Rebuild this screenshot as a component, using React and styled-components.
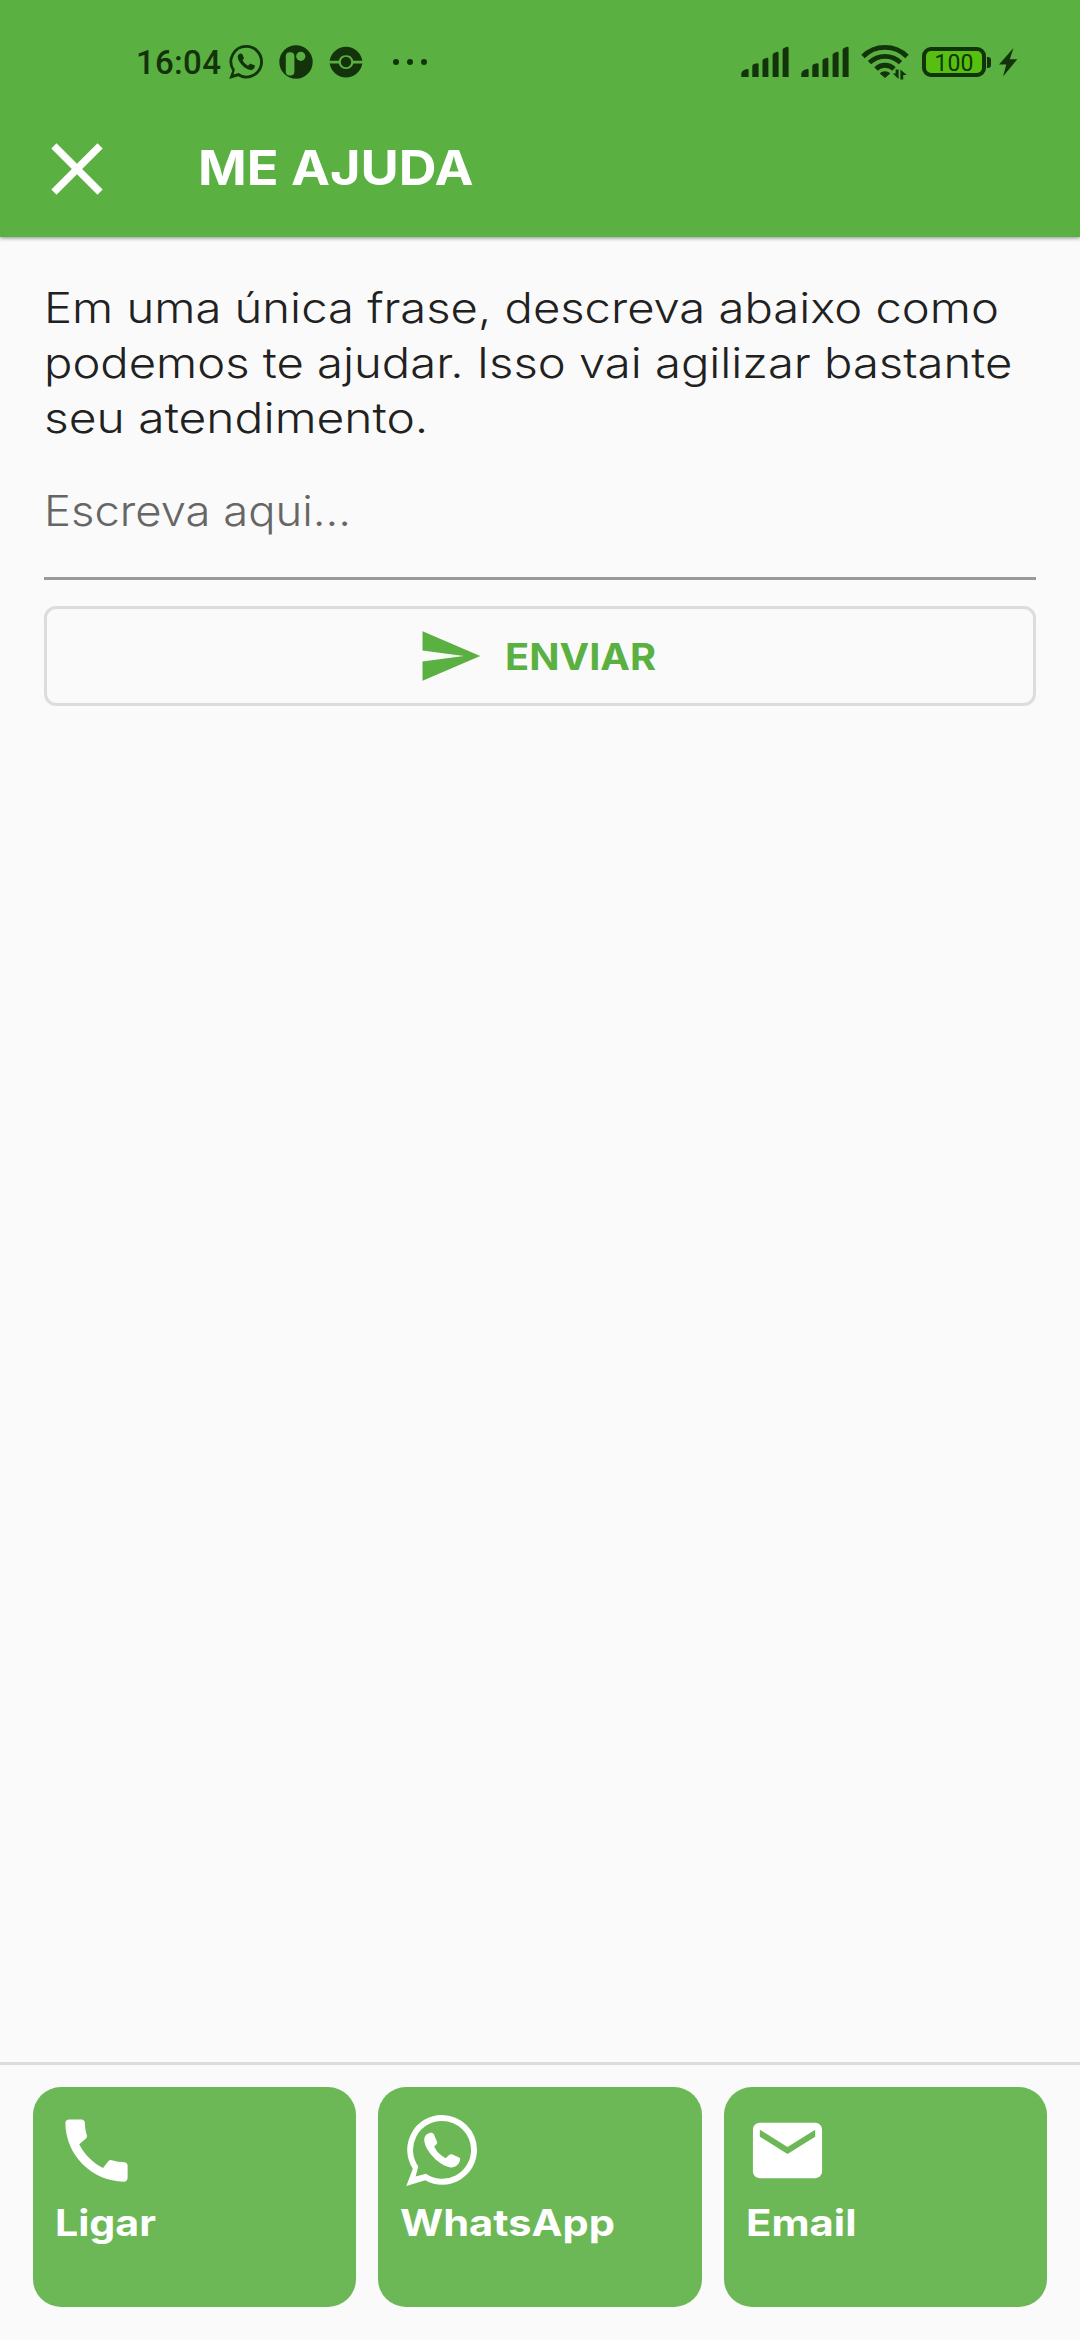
import React, { useState } from "react";
import styled, { createGlobalStyle, ThemeProvider } from "styled-components";
import { MdCall, MdClose, MdEmail, MdSend } from "react-icons/md";

const theme = {
    colors: {
        primary: "#5bb042",
        card: "#6cb856",
        background: "#fafafa",
        border: "#dcdcdc",
        text: "#212121",
        hint: "#666666",
        underline: "#999999",
        status: "#13340a",
        white: "#ffffff",
    },
};

const GlobalStyle = createGlobalStyle`
    * {
        box-sizing: border-box;
    }

    body {
        margin: 0;
        background-color: #fafafa;
        font-family: "Inter", "Liberation Sans", sans-serif;
    }

    svg {
        display: block;
        flex-shrink: 0;
    }
`;

const Screen = styled.div`
    display: flex;
    flex-direction: column;
    width: 1080px;
    height: 2340px;
    background-color: ${({ theme }) => theme.colors.background};
`;

const Header = styled.header`
    height: 237px;
    background-color: ${({ theme }) => theme.colors.primary};
    box-shadow: 0 1px 4px rgba(0, 0, 0, 0.45);
`;

const StatusBar = styled.div`
    display: flex;
    justify-content: space-between;
    height: 94px;
    padding: 30px 62px 0 136px;
    color: ${({ theme }) => theme.colors.status};
`;

const StatusGroup = styled.div`
    display: flex;
    align-items: center;
    height: 64px;
    gap: ${({ $gap }) => $gap}px;
`;

const Clock = styled.span`
    width: 77px;
    padding-top: 2px;
    font-family: "Roboto", sans-serif;
    font-size: 33px;
    font-weight: 500;
    letter-spacing: 0.3px;
    line-height: 64px;
    white-space: nowrap;
`;

const More = styled.span`
    margin-left: 13px;
`;

const Battery = styled.div`
    display: flex;
    align-items: center;
    gap: 1px;
    margin: 0 -5px 0 1px;
`;

const BatteryBody = styled.div`
    display: flex;
    align-items: center;
    justify-content: center;
    width: 64px;
    height: 30px;
    padding-top: 3px;
    border: 4px solid ${({ theme }) => theme.colors.status};
    border-radius: 9px;
    background-color: #55c00f;
    font-family: "Roboto", sans-serif;
    font-size: 23px;
    line-height: 22px;
`;

const BatteryTip = styled.div`
    width: 4px;
    height: 11px;
    border-radius: 0 3px 3px 0;
    background-color: ${({ theme }) => theme.colors.status};
`;

const AppBar = styled.div`
    display: flex;
    align-items: center;
    height: 143px;
    padding: 7px 33px 0;
    color: ${({ theme }) => theme.colors.white};
`;

const IconButton = styled.button`
    padding: 0;
    border: none;
    background: none;
    color: inherit;
`;

const Stretched = styled.span`
    display: block;
    width: fit-content;
    white-space: nowrap;
    transform: scaleX(${({ $stretch }) => $stretch});
    transform-origin: left;
`;

const Title = styled.h1`
    margin: 0 0 3px 77px;
    font-size: 48px;
    font-weight: 700;
    line-height: 60px;
`;

const Content = styled.main`
    display: flex;
    flex: 1;
    flex-direction: column;
    padding: 43px 44px 0;
`;

const Message = styled.p`
    margin: 0;
    color: ${({ theme }) => theme.colors.text};
    font-size: 42px;
    font-weight: 300;
    line-height: 55px;
`;

const Field = styled.div`
    height: 135px;
    border-bottom: 3px solid ${({ theme }) => theme.colors.underline};
`;

const Input = styled.input`
    display: block;
    width: 90%;
    height: 132px;
    margin: 0;
    padding: 0 0 2px;
    border: none;
    outline: none;
    background: none;
    color: ${({ theme }) => theme.colors.text};
    font-family: inherit;
    font-size: 42px;
    font-weight: 300;
    transform: scaleX(1.08);
    transform-origin: left;

    &::placeholder {
        color: ${({ theme }) => theme.colors.hint};
        opacity: 1;
    }
`;

const SendButton = styled.button`
    display: flex;
    align-items: center;
    justify-content: center;
    gap: 22px;
    height: 100px;
    margin-top: 26px;
    padding: 0 17px 0 0;
    border: 3px solid ${({ theme }) => theme.colors.border};
    border-radius: 12px;
    background: none;
    color: ${({ theme }) => theme.colors.primary};
    font-family: inherit;
    font-size: 37px;
    font-weight: 700;
`;

const Footer = styled.footer`
    display: grid;
    grid-template-columns: repeat(3, 1fr);
    gap: 22px;
    padding: 22px 33px 33px;
    border-top: 3px solid ${({ theme }) => theme.colors.border};
`;

const ContactCard = styled.button`
    display: flex;
    flex-direction: column;
    align-items: flex-start;
    height: 220px;
    padding: 22px;
    border: none;
    border-radius: 28px;
    background-color: ${({ theme }) => theme.colors.card};
    color: ${({ theme }) => theme.colors.white};
    font-family: inherit;
`;

const CardIcon = styled.span`
    display: flex;
    align-items: center;
    justify-content: center;
    width: 83px;
    height: 83px;
`;

const CardLabel = styled(Stretched)`
    margin-top: 8px;
    font-size: 37px;
    font-weight: 700;
    line-height: 46px;
`;

const WhatsAppIcon = ({ size }) => (
    <svg width={size} height={size} viewBox="137 228 214 214" fill="currentColor">
        <path
            fillRule="evenodd"
            d="M157.5 390A105 105 0 0 1 246 228A105 105 0 0 1 351 333A105 105 0 0 1 195 425L138 442ZM174 383L166 413L197 405A87 87 0 0 0 333 333A87 87 0 0 0 246 246A87 87 0 0 0 174 383Z"
        />
        <path d="M206 283C212 280 219 282 221 286L231 310C232 313 230 315 228 317L222 323C228 338 242 350 256 358L268 348C271 345 274 346 277 347L297 356C300 358 301 360 300 364C297 378 286 387 272 386C240 382 196 340 192 305C191 295 197 286 206 283Z" />
    </svg>
);

const ParkingIcon = () => (
    <svg width="34" height="34" viewBox="0 0 34 34">
        <circle cx="17" cy="17" r="16.7" fill="currentColor" />
        <rect x="6.8" y="7.3" width="8.6" height="23.2" rx="4" fill="#5bb042" />
        <circle cx="21.8" cy="11.3" r="4.6" fill="#5bb042" />
    </svg>
);

const BallIcon = () => (
    <svg width="34" height="34" viewBox="0 0 34 34" fill="currentColor">
        <path d="M0.7 15.7A16.5 16.5 0 0 1 33.3 15.7H24.3A7.6 7.6 0 0 0 9.7 15.7Z" />
        <path d="M0.7 18.5A16.5 16.5 0 0 0 33.3 18.5H24.3A7.6 7.6 0 0 1 9.7 18.5Z" />
        <circle cx="17" cy="17" r="5.2" />
    </svg>
);

const DotsIcon = () => (
    <svg width="36" height="8" viewBox="0 0 36 8" fill="currentColor">
        <circle cx="4" cy="4" r="3" />
        <circle cx="18" cy="4" r="3" />
        <circle cx="32" cy="4" r="3" />
    </svg>
);

const SignalIcon = () => (
    <svg width="48" height="34" viewBox="0 0 48 34" fill="currentColor">
        <path d="M0.3 32V28.5Q0.6 26 3 25L6 24Q7.6 23.7 7.6 25V32Z" />
        <path d="M11.3 32V21Q11.5 19.5 13 19L16 18.2Q17.6 18 17.6 19.5V32Z" />
        <path d="M21.5 32V15.5Q21.7 14.3 23 13.8L26 12.8Q27.4 12.7 27.4 14V32Z" />
        <path d="M31.6 32V9.7Q31.8 8.4 33 7.9L36 6.8Q37.6 6.6 37.6 8V32Z" />
        <path d="M41.6 32V4.7Q41.8 3.4 43 2.9L46 1.8Q47.6 1.6 47.6 3V32Z" />
    </svg>
);

const WifiIcon = () => (
    <svg width="48" height="36" viewBox="0 0 48 36" fill="none">
        <g stroke="currentColor" strokeWidth="4.8">
            <path d="M2 12.5C14 0.4 34 0.4 46 12.5" />
            <path d="M8.5 18.6C17 10.2 31 10.2 39.5 18.6" />
            <path d="M15 25C20 20 28 20 33 25" />
        </g>
        <path
            d="M24 34L18.8 29.4C21.5 26.6 26.5 26.6 29.2 29.4ZM37.6 25.5V35L31.8 29.5H34.6V25.5ZM39.4 35.5V25.5L45.8 31H42.2V35.5Z"
            fill="currentColor"
        />
    </svg>
);

const BoltIcon = () => (
    <svg width="20" height="30" viewBox="0 0 20 30" fill="currentColor">
        <path d="M15.5 1L1 17.5H8.3L5 29.5L19.3 12.3H11.8Z" />
    </svg>
);

const contacts = [
    { label: "Ligar", icon: <MdCall size={83} />, stretch: 1.11 },
    { label: "WhatsApp", icon: <WhatsAppIcon size={71} />, stretch: 1.125 },
    { label: "Email", icon: <MdEmail size={83} />, stretch: 1.13 },
];

const HelpPage = () => {
    const [message, setMessage] = useState("");

    return (
        <Screen>
            <Header>
                <StatusBar>
                    <StatusGroup $gap={16}>
                        <Clock>16:04</Clock>
                        <WhatsAppIcon size={34} />
                        <ParkingIcon />
                        <BallIcon />
                        <More>
                            <DotsIcon />
                        </More>
                    </StatusGroup>
                    <StatusGroup $gap={12}>
                        <SignalIcon />
                        <SignalIcon />
                        <WifiIcon />
                        <Battery>
                            <BatteryBody>100</BatteryBody>
                            <BatteryTip />
                        </Battery>
                        <BoltIcon />
                    </StatusGroup>
                </StatusBar>
                <AppBar>
                    <IconButton type="button" aria-label="Fechar">
                        <MdClose size={88} />
                    </IconButton>
                    <Title>
                        <Stretched $stretch={1.09}>ME AJUDA</Stretched>
                    </Title>
                </AppBar>
            </Header>

            <Content>
                <Message>
                    <Stretched $stretch={1.123}>Em uma única frase, descreva abaixo como</Stretched>
                    <Stretched $stretch={1.123}>podemos te ajudar. Isso vai agilizar bastante</Stretched>
                    <Stretched $stretch={1.142}>seu atendimento.</Stretched>
                </Message>
                <Field>
                    <Input
                        type="text"
                        placeholder="Escreva aqui..."
                        value={message}
                        onChange={(e) => setMessage(e.target.value)}
                    />
                </Field>
                <SendButton type="button">
                    <MdSend size={66} />
                    <Stretched $stretch={1.075}>ENVIAR</Stretched>
                </SendButton>
            </Content>

            <Footer>
                {contacts.map(({ label, icon, stretch }) => (
                    <ContactCard key={label} type="button">
                        <CardIcon>{icon}</CardIcon>
                        <CardLabel $stretch={stretch}>{label}</CardLabel>
                    </ContactCard>
                ))}
            </Footer>
        </Screen>
    );
};

const App = () => (
    <ThemeProvider theme={theme}>
        <GlobalStyle />
        <HelpPage />
    </ThemeProvider>
);

export default App;
